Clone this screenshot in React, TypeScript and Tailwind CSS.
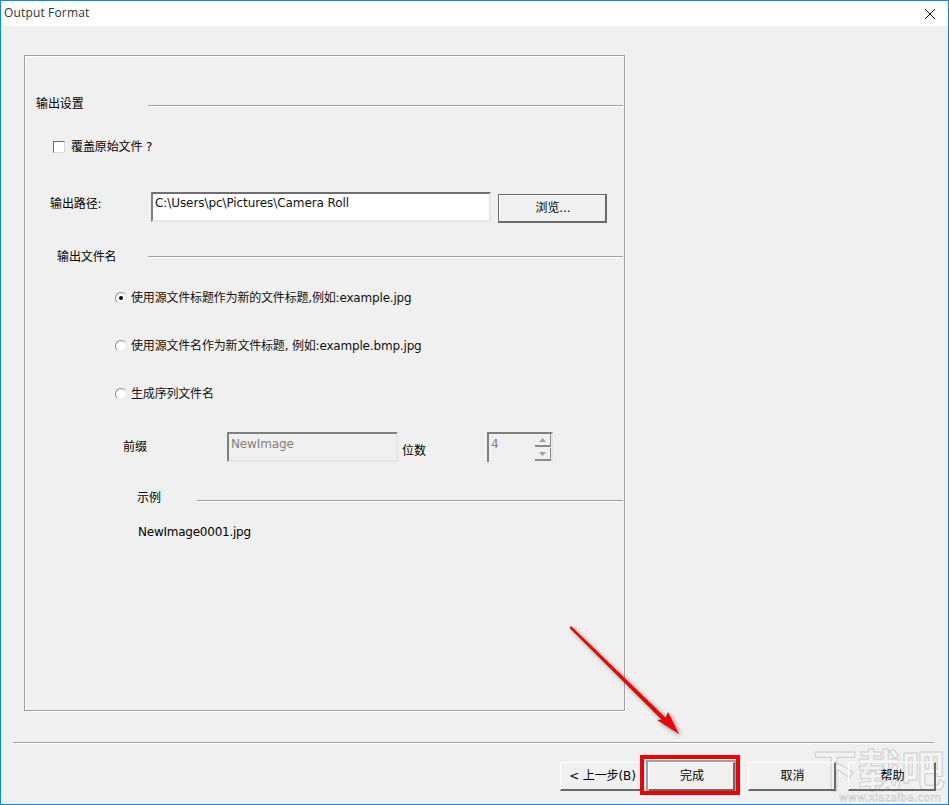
const ui = { fontFamily: '"DejaVu Sans","Noto Sans CJK SC",sans-serif' };

function Line({ width }: { width: string }) {
  return <span className={`${width} mt-[4px] h-[2px] shrink-0 border-t border-b border-t-[#a0a0a0] border-b-white`} />;
}

function Radio({ checked, label }: { checked?: boolean; label: string }) {
  return (
    <div className="flex h-[48px] items-center pl-[79px]">
      <span className="flex h-[12px] w-[12px] shrink-0 items-center justify-center rounded-full border border-t-[#8a8a8a] border-l-[#8a8a8a] border-r-[#e4e4e4] border-b-[#e4e4e4] bg-white">
        {checked && <span className="h-[4px] w-[4px] rounded-full bg-black" />}
      </span>
      <span className="ml-[4px] text-[12px] tracking-[-0.18px] text-[#111]">{label}</span>
    </div>
  );
}

function Btn({ label, width }: { label: string; width: string }) {
  return (
    <div className={`${width} flex h-[29px] shrink-0 items-center justify-center border-t border-l border-white border-r-2 border-b-2 border-r-[#696969] border-b-[#696969] pl-[2px] text-[12px] text-black`}>
      {label}
    </div>
  );
}

export default function App() {
  return (
    <div style={ui} className="relative flex h-[805px] w-[949px] flex-col overflow-hidden border border-[#0f86df] bg-[#f0f0f0] tracking-[-0.12px] text-black">
      <div className="flex h-[25px] shrink-0 items-center justify-between bg-white pb-[2px] pl-[3px] pr-[10px]">
        <span className="text-[12px] tracking-[0.15px] text-[#333]" style={{ fontFamily: '"Open Sans","Noto Sans CJK SC",sans-serif' }}>Output Format</span>
        <svg width="12" height="12" viewBox="0 0 12 12" className="mr-[2px] mt-[2px]"><path d="M1 1L11 11M11 1L1 11" stroke="#111" strokeWidth="1" /></svg>
      </div>

      <div className="ml-[23px] mt-[29px] flex h-[656px] w-[601px] flex-col border border-[#a0a0a0] pl-[11px] pt-[38px] shadow-[inset_1px_1px_0_#fff,1px_1px_0_#fff]">
        <div className="flex h-[20px] items-center text-[12px]">
          <span className="w-[112px] shrink-0">输出设置</span>
          <Line width="w-[475px]" />
        </div>
        <div className="mt-[23px] flex h-[20px] items-center pl-[17px] text-[12px]">
          <span className="h-[12px] w-[12px] border border-t-[#6a6a6a] border-l-[#6a6a6a] border-r-[#d8d8d8] border-b-[#d8d8d8] bg-white" />
          <span className="ml-[6px]">覆盖原始文件 ?</span>
        </div>
        <div className="mt-[35px] flex h-[31px] items-start pl-[14px] text-[12px]">
          <span className="mt-[3px] w-[101px] shrink-0">输出路径:</span>
          <div className="flex h-[30px] w-[340px] items-start border-2 border-t-[#6f6f6f] border-l-[#7f7f7f] border-r-[#e6e6e6] border-b-[#e6e6e6] bg-white pl-[2px]">
            <span className="text-[12px] tracking-[-0.08px] text-[#111]">C:\Users\pc\Pictures\Camera Roll</span>
          </div>
          <div className="ml-[7px] mt-[2px] flex h-[29px] w-[109px] items-center justify-center border border-r-2 border-b-2 border-[#6a6a6a] pl-[2px] text-[12px] shadow-[inset_1px_1px_0_#fff]">浏览...</div>
        </div>
        <div className="mt-[24px] flex h-[20px] items-center pl-[21px] text-[12px]">
          <span className="w-[91px] shrink-0">输出文件名</span>
          <span className="h-[2px] w-[475px] border-t border-b border-t-[#a0a0a0] border-b-white" />
        </div>
        <div className="mt-[7px]">
          <Radio checked label="使用源文件标题作为新的文件标题,例如:example.jpg" />
          <Radio label="使用源文件名作为新文件标题, 例如:example.bmp.jpg" />
          <Radio label="生成序列文件名" />
        </div>
        <div className="mt-[14px] flex h-[30px] items-center pl-[87px] text-[12px]">
          <span className="w-[104px] shrink-0">前缀</span>
          <div className="h-[30px] w-[171px] border-2 border-t-[#7f7f7f] border-l-[#7f7f7f] border-r-[#e6e6e6] border-b-[#e6e6e6] pl-[2px] pt-[1px] text-[#808080]">NewImage</div>
          <span className="ml-[4px] mt-[8px] w-[85px] shrink-0">位数</span>
          <div className="flex h-[30px] w-[66px] justify-between border-2 border-t-[#7f7f7f] border-l-[#7f7f7f] border-r-[#e6e6e6] border-b-0 pl-[2px] pt-[1px] text-[#808080]">
            <span>4</span>
            <div className="mt-[-1px] flex w-[16px] flex-col gap-[1px]">
              <span className="flex h-[13px] items-center justify-center border-b-2 border-r border-[#8a8a8a]">
                <svg width="7" height="4" viewBox="0 0 7 4"><path d="M3.5 0L7 4H0Z" fill="#a0a0a0" /></svg>
              </span>
              <span className="flex h-[13px] items-center justify-center border-b-2 border-r border-[#8a8a8a]">
                <svg width="7" height="4" viewBox="0 0 7 4"><path d="M0 0H7L3.5 4Z" fill="#a0a0a0" /></svg>
              </span>
            </div>
          </div>
        </div>
        <div className="mt-[26px] flex h-[20px] items-center pl-[101px] text-[12px]">
          <span className="w-[60px] shrink-0">示例</span>
          <span className="mt-[6px] h-[2px] w-[426px] border-t border-b border-t-[#a0a0a0] border-b-white" />
        </div>
        <div className="mt-[15px] pl-[102px] text-[12px] tracking-[-0.24px]">NewImage0001.jpg</div>
      </div>

      <div className="ml-[12px] mt-[31px] h-[2px] w-[921px] border-t border-b border-t-[#a0a0a0] border-b-white" />
      <div className="relative z-10 mt-[18px] flex pl-[559px]">
        <Btn label="< 上一步(B)" width="w-[84px]" />
        <div className="ml-[4px] outline-2 outline-[#a0a0a0]"><Btn label="完成" width="w-[87px]" /></div>
        <div className="ml-[13px]"><Btn label="取消" width="w-[88px]" /></div>
        <div className="ml-[12px]"><Btn label="帮助" width="w-[88px]" /></div>
      </div>

      {/* annotations */}
      <div className="absolute left-[639px] top-[754px] z-20 h-[40px] w-[100px] border-[4px] border-[#f00000]" />
      <svg className="pointer-events-none absolute left-[-1px] top-[-1px] [filter:drop-shadow(2px_2px_2px_rgba(0,0,0,0.4))]" width="949" height="805">
        <path d="M569.5 628L571 626L668 720L665 723Z" fill="#f00000" />
        <path d="M679 734L657 720L665 719L668 712Z" fill="#f00000" />
      </svg>
      <div className="pointer-events-none absolute left-[812px] top-[745px] text-[44px] font-bold leading-none tracking-[0px] text-[#ffffff40] [-webkit-text-stroke:1px_#cfcfcf]" style={{ fontFamily: '"Noto Sans CJK SC",sans-serif' }}>下载吧</div>
      <div className="pointer-events-none absolute left-[838px] top-[791px] text-[11px] leading-[12px] tracking-[0px] text-[#ffffff40] [-webkit-text-stroke:0.5px_#c8c8c8]">www.xiazaiba.com</div>
    </div>
  );
}
